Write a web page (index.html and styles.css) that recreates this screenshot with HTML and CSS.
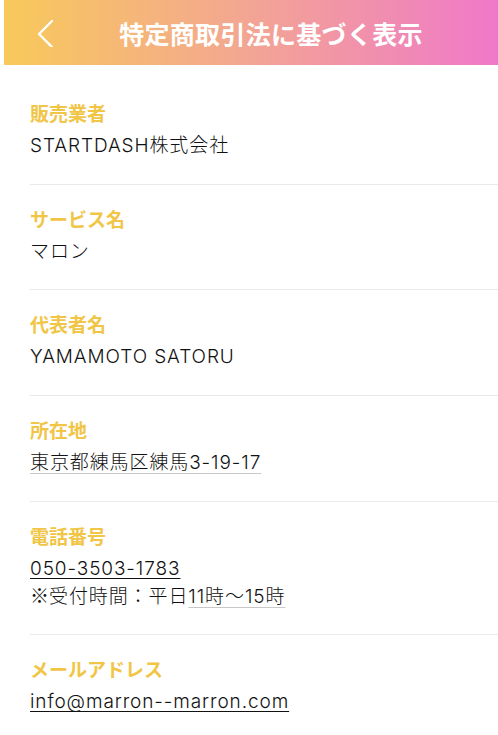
FILE: index.html
```html
<!DOCTYPE html>
<html>
<head>
  <meta charset="utf-8">
  <title>特定商取引法に基づく表示</title>
  <link rel="stylesheet" href="styles.css">
</head>
<body>
  <div id="page">
    <header class="topbar">
      <a class="back" href="#">
        <svg width="18" height="30" viewBox="0 0 18 30">
          <polyline points="17,4 4,17 17,30" fill="none" stroke="#fff" stroke-width="2.4" stroke-linecap="round" stroke-linejoin="round"/>
        </svg>
      </a>
      <h1 class="title">特定商取引法に基づく表示</h1>
    </header>

    <ul class="info-list">
      <li class="info-item">
        <div class="label">販売業者</div>
        <div class="value">STARTDASH株式会社</div>
      </li>
      <li class="info-item">
        <div class="label">サービス名</div>
        <div class="value">マロン</div>
      </li>
      <li class="info-item">
        <div class="label">代表者名</div>
        <div class="value">YAMAMOTO SATORU</div>
      </li>
      <li class="info-item">
        <div class="label">所在地</div>
        <div class="value"><span class="soft-link">東京都練馬区練馬3-19-17</span></div>
      </li>
      <li class="info-item">
        <div class="label">電話番号</div>
        <div class="value"><a class="link" href="#">050-3503-1783</a></div>
        <div class="value note"><span class="cjk">※</span>受付時間：平日<span class="soft-link">11時～15時</span></div>
      </li>
      <li class="info-item last">
        <div class="label">メールアドレス</div>
        <div class="value"><a class="link" href="#">info@marron--marron.com</a></div>
      </li>
    </ul>
  </div>
</body>
</html>
```

FILE: styles.css
```css
body {
  margin: 0;
  background: #fff;
  font-family: "Noto Sans CJK JP", "Noto Sans", sans-serif;
  color: #111;
}
#page {
  padding-left: 4px;
}
.topbar {
  height: 65px;
  display: flex;
  align-items: center;
  padding-left: 31px;
  background: linear-gradient(90deg, #f8c95a 0%, #f3a98e 45%, #ef79c9 100%);
}
.back {
  display: block;
  width: 18px;
  height: 30px;
  margin-top: -2px;
}
.back svg {
  display: block;
}
.title {
  flex: 1;
  margin: 0;
  padding-right: 9px;
  text-align: center;
  color: #fff;
  font-size: 25px;
  font-weight: 700;
  letter-spacing: 0.3px;
}
.info-list {
  list-style: none;
  margin: 0 0 0 26px;
  padding: 14px 0 0;
}
.info-item {
  padding: 20px 0 23.7px;
  border-bottom: 1px solid #e9e9e9;
}
.info-item.last {
  border-bottom: none;
}
.label {
  color: #f1c546;
  font-size: 19px;
  font-weight: 700;
  line-height: 28px;
}
.value {
  margin-top: 5px;
  font-family: Inter, "Noto Sans CJK JP", sans-serif;
  font-size: 19px;
  line-height: 28px;
  font-weight: 300;
  letter-spacing: 0.9px;
}
.value.note {
  margin-top: -2px;
}
.cjk {
  font-family: "Noto Sans CJK JP", sans-serif;
  font-weight: 400;
  letter-spacing: 0;
}
.link {
  color: #111;
  text-decoration: underline;
  text-decoration-thickness: 1px;
  text-underline-offset: 3px;
}
.soft-link {
  text-decoration: underline;
  text-decoration-color: #c8c8c8;
  text-decoration-thickness: 1px;
  text-underline-offset: 4px;
}
```
